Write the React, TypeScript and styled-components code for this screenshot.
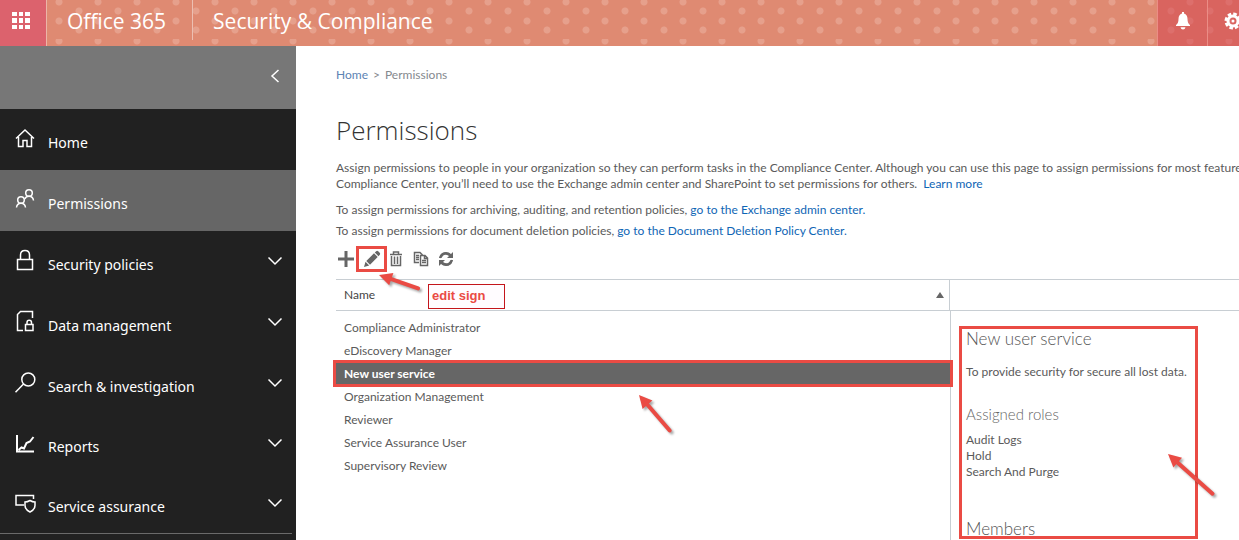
import React from "react";
import styled, { createGlobalStyle, css } from "styled-components";

const RED = "#ea4b44";
const LINE = "#c8ced3";

const GlobalStyle = createGlobalStyle`
  *, *::before, *::after { box-sizing: border-box; }
  body {
    margin: 0;
    background: #fff;
    color: #5a5a5a;
    font: 12px/16px Lato, "Liberation Sans", sans-serif;
    font-variant-ligatures: none;
  }
  h1, h2, h3, p, ul { margin: 0; padding: 0; }
  ul { list-style: none; }
  button { border: 0; padding: 0; background: none; color: inherit; font: inherit; cursor: pointer; }
`;

const Page = styled.div`
  display: flex;
  flex-direction: column;
  height: 100vh;
  overflow: hidden;
`;

/* Suite header */

const Header = styled.header`
  display: flex;
  flex: none;
  height: 46px;
  overflow: hidden;
  color: #fff;
  font: 21px/42px "Open Sans", "Noto Sans", sans-serif;
  background-color: #df8a72;
  background-image:
    radial-gradient(circle at 20px 2px, #e6a08c 3px, transparent 4px),
    radial-gradient(circle at 20px 21px, #e6a08c 3px, transparent 4px),
    radial-gradient(circle at 1px 11px, #e6a08c 3px, transparent 4px),
    radial-gradient(circle at 1px 30px, #e6a08c 3px, transparent 4px),
    radial-gradient(circle at 40px 11px, #e6a08c 3px, transparent 4px),
    radial-gradient(circle at 40px 30px, #e6a08c 3px, transparent 4px);
  background-size: 39px 39px;
`;

const AppLauncher = styled.button`
  display: flex;
  align-items: center;
  justify-content: center;
  width: 47px;
  padding: 0 5px 5px 0;
  background: #dc626d;
  border-right: 1px solid #ecb5a8;
`;

const Brand = styled.a`
  align-self: flex-start;
  height: 40px;
  padding: 0 26px 0 20px;
  border-right: 1px solid #ecbfb2;
  color: inherit;
  text-decoration: none;
`;

const Product = styled.span`
  flex: 1;
  padding-left: 20px;
  white-space: nowrap;
`;

const HeaderButton = styled.button<{ $clipped?: boolean }>`
  display: flex;
  align-items: center;
  justify-content: ${(p) => (p.$clipped ? "flex-start" : "center")};
  width: ${(p) => (p.$clipped ? 32 : 50)}px;
  padding: 0 0 5px ${(p) => (p.$clipped ? 16 : 0)}px;
  overflow: hidden;
  background: rgba(212, 62, 76, 0.5);
  border-left: 1px solid #eb8d86;
`;

/* Side navigation */

const Body = styled.div`
  display: flex;
  flex: 1;
  min-height: 0;
`;

const Sidebar = styled.nav`
  flex: none;
  width: 296px;
  background: #212121;
  color: #fff;
  overflow: hidden;
`;

const Collapse = styled.button`
  display: flex;
  align-items: center;
  justify-content: flex-end;
  width: 100%;
  height: 63px;
  padding: 0 15px 4px 0;
  background: #777;
`;

const NavList = styled.ul`
  margin-right: 4px;
  border-bottom: 1px solid #6a6a6a;
`;

const NavItem = styled.button<{ $active?: boolean; $short?: boolean }>`
  display: flex;
  align-items: center;
  gap: 12px;
  width: 296px;
  height: ${(p) => (p.$short ? 60 : 61)}px;
  padding: 0 11px 3px 14px;
  background: ${(p) => (p.$active ? "#666" : "transparent")};
  font: 14px/20px "Noto Sans", "Open Sans", sans-serif;
  text-align: left;
`;

const NavLabel = styled.span`
  flex: 1;
  padding-top: 10px;
`;

const Icon = styled.svg`
  display: block;
  flex: none;
  fill: none;
  stroke: currentColor;
  stroke-width: 1.5;
`;

/* Main column */

const Main = styled.main`
  flex: 1;
  min-width: 0;
  display: flex;
  flex-direction: column;
  padding: 19px 0 0 40px;
  overflow: hidden;
`;

const Breadcrumb = styled.nav`
  display: flex;
  gap: 5px;
  line-height: 20px;
  color: #85898e;
`;

const Link = styled.a<{ $muted?: boolean }>`
  color: ${(p) => (p.$muted ? "#5c83b4" : "#0f66b5")};
  text-decoration: none;
`;

const Title = styled.h1`
  margin-top: 25px;
  color: #333;
  font: 300 26px/40px "Open Sans", "Noto Sans", sans-serif;
`;

const Intro = styled.p`
  margin-top: 10px;
  white-space: nowrap;
`;

const Note = styled.p<{ $first?: boolean }>`
  margin-top: ${(p) => (p.$first ? 10 : 5)}px;
`;

const Toolbar = styled.div`
  display: flex;
  align-items: center;
  gap: 2px;
  height: 26px;
  margin: 7px 0;
  color: #666;
`;

const Tool = styled.button<{ $boxed?: boolean }>`
  position: relative;
  display: flex;
  align-items: center;
  justify-content: center;
  width: ${(p) => (p.$boxed ? 31 : 20)}px;
  height: 26px;
  margin-right: ${(p) => (p.$boxed ? -3 : 3)}px;
  margin-left: ${(p) => (p.$boxed ? -5 : 0)}px;
  ${(p) => p.$boxed && css`border: 3px solid ${RED};`}
`;

const Panes = styled.div`
  display: flex;
  flex: 1;
  min-height: 0;
`;

const ListPane = styled.div`
  flex: none;
  width: 68%;
`;

const Table = styled.table`
  width: 100%;
  border-collapse: separate;
  border-spacing: 0;

  th {
    height: 32px;
    padding: 0 5px 0 8px;
    border: solid ${LINE};
    border-width: 1px 1px 1px 0;
    color: #444;
    font-weight: 400;
    text-align: left;
  }
  tbody::before {
    content: "";
    display: block;
    height: 5px;
  }
`;

const SortHeader = styled.span`
  display: flex;
  align-items: center;
  justify-content: space-between;
`;

const Cell = styled.td<{ $selected?: boolean }>`
  position: relative;
  height: 23px;
  padding: 0 8px;
  ${(p) =>
    p.$selected &&
    css`
      background: #666;
      color: #fff;
      font-weight: 700;
    `}
`;

const RowFrame = styled.span`
  position: absolute;
  inset: -2px -3px;
  border: 3px solid ${RED};
`;

const DetailPane = styled.section`
  flex: 1;
  min-width: 0;
  display: flex;
  flex-direction: column;
`;

const DetailHeader = styled.div`
  flex: none;
  height: 32px;
  border: solid ${LINE};
  border-width: 1px 0;
`;

const Detail = styled.div`
  flex: 1;
  padding: 15px 0 0 8px;
  border-left: 1px solid ${LINE};
`;

const DetailFrame = styled.div`
  position: relative;
  width: 239px;
  height: 213px;
  padding: 0 4px;
  border: 3px solid ${RED};
  white-space: nowrap;
`;

const Heading = styled.h2`
  color: #555;
  font-size: 17px;
  font-weight: 300;
  line-height: 20px;
`;

const SubHeading = styled.h3`
  margin: 24px 0 8px;
  color: #666;
  font-size: 15px;
  font-weight: 300;
  line-height: 20px;
`;

const Description = styled.p`
  margin-top: 15px;
`;

const Roles = styled.ul`
  margin-bottom: 39px;
`;

/* Callouts over the page */

const Callout = styled.span`
  position: absolute;
  top: 35px;
  left: 69px;
  width: 77px;
  height: 25px;
  padding-left: 3px;
  border: 1px solid #c4161c;
  background: #fffcff;
  color: ${RED};
  font: 700 13px/22px "Liberation Sans", sans-serif;
  text-align: left;
  white-space: nowrap;
`;

const ArrowSvg = styled.svg<{ $left: number; $top: number }>`
  position: absolute;
  left: ${(p) => p.$left}px;
  top: ${(p) => p.$top}px;
  z-index: 1;
  overflow: visible;
  filter: drop-shadow(2px 2px 1px rgba(0, 0, 0, 0.35));
`;

/** Arrow whose tip is at the origin and whose tail ends at (dx, dy). */
function Arrow({ dx, dy, left, top }: { dx: number; dy: number; left: number; top: number }) {
  const len = Math.hypot(dx, dy);
  const angle = (Math.atan2(dy, dx) * 180) / Math.PI;
  return (
    <ArrowSvg $left={left} $top={top} width={dx} height={dy} aria-hidden>
      <g transform={`rotate(${angle})`} fill={RED} stroke={RED}>
        <path d="M0 0L13 -6.500V6.500Z" stroke="none" />
        <path d={`M10 0H${len - 2}`} strokeWidth="4" strokeLinecap="round" />
      </g>
    </ArrowSvg>
  );
}

const Chevron = () => (
  <Icon width="20" height="20" viewBox="0 0 20 20">
    <path d="M3.500 7.500L10 14L16.500 7.500" />
  </Icon>
);

const navIcons: Record<string, React.ReactNode> = {
  home: <path d="M2 11.500L11 3L20 11.500M4.500 10V19.500H9V13.500H13V19.500H17.500V10" />,
  people: (
    <>
      <circle cx="15" cy="5" r="3.300" />
      <path d="M10.800 11Q12 8.300 15 8.300Q19 8.300 19.500 12.500" />
      <circle cx="7" cy="12" r="3.300" />
      <path d="M2.500 19.500Q3 15.300 7 15.300Q11 15.300 11.500 19.500" />
    </>
  ),
  lock: <path d="M3.500 10.500H18.500V20.500H3.500ZM6.500 10.500V6Q6.500 1.500 11 1.500Q15.500 1.500 15.500 6V10.500" />,
  data: (
    <>
      <path d="M9 20.500H3.500V4.500L6.500 1.500H18.500V8" />
      <path d="M11.500 14.500H19V20.500H11.500ZM13 14.500V12.500Q13 10.300 15.200 10.300Q17.500 10.300 17.500 12.500V14.500" />
    </>
  ),
  search: (
    <>
      <circle cx="14.300" cy="8.500" r="6.500" />
      <path d="M9.500 13L1.500 21.300" />
    </>
  ),
  reports: <path strokeWidth="2" d="M3 4V20.500H20M4.500 19L7.500 16.500L10 17.500L12.500 12L16 10.500L19.500 6" />,
  shield: (
    <>
      <path d="M10 14H2V4.500H19.500V8" />
      <path d="M16 9.500Q18.500 11 21 11V14.500Q21 18.500 16 21Q11 18.500 11 14.500V11Q13.500 11 16 9.500Z" />
    </>
  ),
};

const navItems = [
  { label: "Home", icon: "home" },
  { label: "Permissions", icon: "people", active: true },
  { label: "Security policies", icon: "lock", expands: true },
  { label: "Data management", icon: "data", expands: true },
  { label: "Search & investigation", icon: "search", expands: true, short: true },
  { label: "Reports", icon: "reports", expands: true, short: true },
  { label: "Service assurance", icon: "shield", expands: true, short: true },
];

const roleGroups = [
  "Compliance Administrator",
  "eDiscovery Manager",
  "New user service",
  "Organization Management",
  "Reviewer",
  "Service Assurance User",
  "Supervisory Review",
];

export default function App() {
  return (
    <Page>
      <GlobalStyle />
      <Header>
        <AppLauncher aria-label="App launcher">
          <svg width="18" height="17" fill="#fff">
            {[0, 7, 13].map((x) => [0, 6, 13].map((y) => <rect key={`${x}-${y}`} x={x} y={y} width={x === 7 ? 4 : 5} height={y === 6 ? 5 : 4} />))}
          </svg>
        </AppLauncher>
        <Brand href="#">Office 365</Brand>
        <Product>Security &amp; Compliance</Product>
        <HeaderButton aria-label="Notifications">
          <svg width="16" height="18" viewBox="0 0 16 18" fill="#fff">
            <path d="M7 0H9V1.500Q12.500 2.500 12.500 7Q12.500 11.500 15 13V14H1V13Q3.500 11.500 3.500 7Q3.500 2.500 7 1.500ZM5.500 15.200H10.500Q10 17.500 8 17.500Q6 17.500 5.500 15.200Z" />
          </svg>
        </HeaderButton>
        <HeaderButton $clipped aria-label="Settings">
          <Icon width="18" height="18" viewBox="0 0 18 18">
            <circle cx="9" cy="9" r="7" strokeWidth="3" strokeDasharray="3.500 2" />
            <circle cx="9" cy="9" r="5" strokeWidth="3" />
            <circle cx="9" cy="9" r="1.500" fill="#fff" stroke="none" />
          </Icon>
        </HeaderButton>
      </Header>

      <Body>
        <Sidebar aria-label="Sections">
          <Collapse aria-label="Collapse navigation">
            <Icon width="12" height="14" viewBox="0 0 12 14">
              <path d="M9.500 1L3 7L9.500 13" />
            </Icon>
          </Collapse>
          <NavList>
            {navItems.map((item) => (
              <li key={item.label}>
                <NavItem $active={item.active} $short={item.short}>
                  <Icon width="22" height="22" viewBox="0 0 22 22">
                    {navIcons[item.icon]}
                  </Icon>
                  <NavLabel>{item.label}</NavLabel>
                  {item.expands && <Chevron />}
                </NavItem>
              </li>
            ))}
          </NavList>
        </Sidebar>

        <Main>
          <Breadcrumb aria-label="Breadcrumb">
            <Link $muted href="#">Home</Link>
            <span>&gt;</span>
            <span>Permissions</span>
          </Breadcrumb>
          <Title>Permissions</Title>
          <Intro>
            Assign permissions to people in your organization so they can perform tasks in the Compliance Center. Although you can use this page to assign permissions for most features in the
            <br />
            Compliance Center, you’ll need to use the Exchange admin center and SharePoint to set permissions for others. &nbsp;
            <Link href="#">Learn more</Link>
          </Intro>
          <Note $first>
            To assign permissions for archiving, auditing, and retention policies, <Link href="#">go to the Exchange admin center.</Link>
          </Note>
          <Note>
            To assign permissions for document deletion policies, <Link href="#">go to the Document Deletion Policy Center.</Link>
          </Note>

          <Toolbar>
            <Tool aria-label="Add">
              <svg width="16" height="16" viewBox="0 0 16 16" fill="currentColor">
                <path d="M6.500 0H9.500V6.500H16V9.500H9.500V16H6.500V9.500H0V6.500H6.500Z" />
              </svg>
            </Tool>
            <Tool $boxed aria-label="Edit">
              <svg width="18" height="18" viewBox="0 0 18 18" fill="currentColor">
                <path d="M1 17L2.500 11.800L6.200 15.500ZM3.300 11L11 3.300L14.700 7L7 14.700ZM11.800 2.500L13.200 1.200Q14.200 0.500 15.200 1.300L16.700 2.800Q17.500 3.800 16.800 4.800L15.500 6.200Z" />
              </svg>
              <Arrow left={20} top={26} dx={41} dy={14} />
              <Callout>edit sign</Callout>
            </Tool>
            <Tool aria-label="Delete">
              <Icon width="14" height="16" viewBox="0 0 14 16">
                <path strokeWidth="1.500" d="M1 3.500H13M4.500 3V1H9.500V3M2.500 5V14.500H11.500V5M5.500 5.500V13M8.500 5.500V13" />
              </Icon>
            </Tool>
            <Tool aria-label="Copy">
              <Icon width="16" height="16" viewBox="0 0 16 16">
                <path d="M6 11.500H1.500V1.500H7L9.500 4M3 4.500H6M3 6.500H6M3 8.500H6" />
                <path d="M7.500 4.500H12L14.500 7V14.500H7.500ZM11.500 4.500V7.500H14.500M9 9.500H13M9 11.500H13" />
              </Icon>
            </Tool>
            <Tool aria-label="Refresh">
              <Icon width="16" height="16" viewBox="0 0 16 16">
                <path style={undefined} d="M2 7Q3 2.300 8 2.300Q11 2.300 13 5M14 9Q13 13.700 8 13.700Q5 13.700 3 11" />
                <path d="M1 7Q2.500 1 8 1Q11 1 13 3L15 1V7H9L11 5Q6 1.500 3.500 7ZM15 9Q13.500 15 8 15Q5 15 3 13L1 15V9H7L5 11Q10 14.500 12.500 9Z" fill="currentColor" stroke="none" />
              </Icon>
            </Tool>
          </Toolbar>

          <Panes>
            <ListPane>
              <Table>
                <thead>
                  <tr>
                    <th scope="col" aria-sort="ascending">
                      <SortHeader>
                        Name
                        <svg width="8" height="6" fill="#666" aria-hidden>
                          <path d="M4 0L8 6H0Z" />
                        </svg>
                      </SortHeader>
                    </th>
                  </tr>
                </thead>
                <tbody>
                  {roleGroups.map((name) => {
                    const selected = name === "New user service";
                    return (
                      <tr key={name}>
                        <Cell $selected={selected}>
                          {name}
                          {selected && (
                            <>
                              <RowFrame />
                              <Arrow left={303} top={33} dx={32} dy={37} />
                            </>
                          )}
                        </Cell>
                      </tr>
                    );
                  })}
                </tbody>
              </Table>
            </ListPane>
            <DetailPane>
              <DetailHeader />
              <Detail>
                <DetailFrame>
                  <Heading>New user service</Heading>
                  <Description>To provide security for secure all lost data.</Description>
                  <SubHeading>Assigned roles</SubHeading>
                  <Roles>
                    <li>Audit Logs</li>
                    <li>Hold</li>
                    <li>Search And Purge</li>
                  </Roles>
                  <Heading>Members</Heading>
                  <Arrow left={206} top={125} dx={46} dy={41} />
                </DetailFrame>
              </Detail>
            </DetailPane>
          </Panes>
        </Main>
      </Body>
    </Page>
  );
}
